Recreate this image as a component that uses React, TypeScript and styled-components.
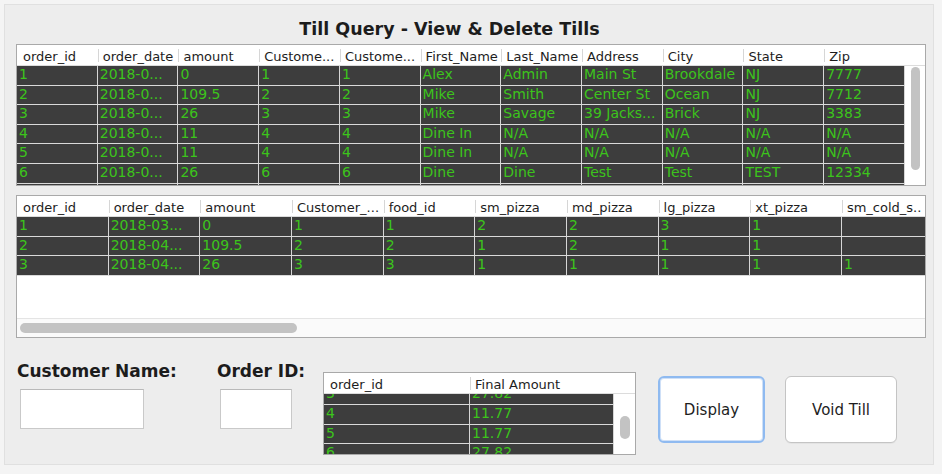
import React from "react";
import styled, { createGlobalStyle } from "styled-components";

const GlobalStyle = createGlobalStyle`
  html, body { margin: 0; padding: 0; background: #f4f4f4; }
  body { font-family: "DejaVu Sans", "Liberation Sans", sans-serif; }
  * { box-sizing: border-box; }
`;

const FONT = `"DejaVu Sans", "Liberation Sans", sans-serif`;

const Frame = styled.div`
  width: 942px;
  height: 474px;
  padding: 4px 8px 9px 4px;
  background: #f4f4f4;
`;

const Panel = styled.div`
  width: 930px;
  height: 461px;
  background: #ededed;
  border: 1px solid #e0e0e0;
  display: flex;
  flex-direction: column;
  padding: 14px 7px 0 11px;
`;

const Title = styled.h1`
  margin: 0 0 5px;
  padding-right: 43px;
  font: bold 17.5px/20px ${FONT};
  color: #1c1c1c;
  text-align: center;
`;

const TableBox = styled.div<{ $h: number; $w?: number; $mt?: number }>`
  flex: none;
  height: ${(p) => p.$h}px;
  width: ${(p) => (p.$w ? `${p.$w}px` : "auto")};
  margin-top: ${(p) => p.$mt ?? 0}px;
  border: 1px solid #a9a9a9;
  background: #ffffff;
  display: flex;
  flex-direction: column;
  overflow: hidden;
`;

const HeaderRow = styled.div`
  flex: none;
  display: flex;
  height: 21px;
  border-bottom: 1px solid #dcdcdc;
  background: #ffffff;
  overflow: hidden;
`;

const HeadCell = styled.div<{ $w: number }>`
  flex: none;
  width: ${(p) => p.$w}px;
  display: flex;
  align-items: center;
  overflow: hidden;
`;

const HeadSep = styled.span`
  flex: none;
  width: 1px;
  height: 13px;
  background: #d6d6d6;
`;

const HeadLabel = styled.span<{ $first?: boolean }>`
  min-width: 0;
  margin-top: 2px;
  padding: 0 2px 0 ${(p) => (p.$first ? 6 : 4)}px;
  font: 13px/15px ${FONT};
  color: #1d1d1d;
  white-space: nowrap;
  overflow: hidden;
  text-overflow: ellipsis;
`;

const HeadCorner = styled.div`
  flex: 1;
  background: #ffffff;
`;

const BodyArea = styled.div`
  flex: 1;
  min-height: 0;
  display: flex;
`;

const RowsViewport = styled.div`
  flex: 1;
  min-width: 0;
  overflow: hidden;
  background: #ffffff;
`;

const RowsInner = styled.div<{ $scroll?: number }>`
  margin-top: ${(p) => -(p.$scroll ?? 0)}px;
`;

const BodyRow = styled.div`
  display: flex;
  height: 19.6px;
  border-bottom: 1px solid #dadada;
`;

const Cell = styled.div<{ $w: number }>`
  flex: none;
  width: ${(p) => p.$w}px;
  background: #3d3d3d;
  border-right: 1px solid #d6d6d6;
  padding-left: 2px;
  color: #3cc41b;
  font: 14px/17px ${FONT};
  white-space: nowrap;
  overflow: hidden;
  text-overflow: ellipsis;
`;

const VTrack = styled.div<{ $w: number }>`
  flex: none;
  width: ${(p) => p.$w}px;
  background: #ffffff;
  padding-left: 6px;
`;

const VThumb = styled.div<{ $top: number; $len: number; $w: number }>`
  width: ${(p) => p.$w}px;
  height: ${(p) => p.$len}px;
  margin-top: ${(p) => p.$top}px;
  border-radius: 5px;
  background: #c3c3c3;
`;

const HTrack = styled.div`
  flex: none;
  height: 19px;
  border-top: 1px solid #e4e4e4;
  background: #fafafa;
  padding: 4px 0 0 3px;
`;

const HThumb = styled.div<{ $len: number }>`
  width: ${(p) => p.$len}px;
  height: 10px;
  border-radius: 5px;
  background: #c3c3c3;
`;

const Gap = styled.div<{ $h: number }>`
  flex: none;
  height: ${(p) => p.$h}px;
`;

const Bottom = styled.div`
  flex: none;
  display: flex;
  align-items: flex-start;
  padding: 23px 0 0 1px;
`;

const FieldGroup = styled.div<{ $w: number }>`
  flex: none;
  width: ${(p) => p.$w}px;
  display: flex;
  flex-direction: column;
  align-items: flex-start;
`;

const FieldLabel = styled.label`
  font: bold 17px/20px ${FONT};
  color: #1c1c1c;
  white-space: nowrap;
`;

const TextInput = styled.input<{ $w: number }>`
  width: ${(p) => p.$w}px;
  height: 40px;
  margin: 8px 0 0 3px;
  background: #ffffff;
  border: 1px solid #c9c9c9;
  border-top-color: #b9b9b9;
  outline: none;
  padding: 0 4px;
  font: 14px ${FONT};
`;

const Button = styled.button<{ $w: number; $ml: number; $focused?: boolean }>`
  flex: none;
  width: ${(p) => p.$w}px;
  height: 67px;
  margin: 15px 0 0 ${(p) => p.$ml}px;
  background: #ffffff;
  border: ${(p) => (p.$focused ? "2px solid #8fbaf0" : "1px solid #c4c4c4")};
  border-radius: 6px;
  box-shadow: ${(p) => (p.$focused ? "inset 0 0 0 1px #cfe0f7" : "0 1px 0 rgba(0,0,0,0.04)")};
  font: 15px ${FONT};
  color: #1e1e1e;
  padding: 0;
  outline: none;
`;

type Row = (string | number)[];

const t1Headers = [
  "order_id",
  "order_date",
  "amount",
  "Custome...",
  "Custome...",
  "First_Name",
  "Last_Name",
  "Address",
  "City",
  "State",
  "Zip",
];

const t1Rows: Row[] = [
  [1, "2018-0...", 0, 1, 1, "Alex", "Admin", "Main St", "Brookdale", "NJ", 7777],
  [2, "2018-0...", 109.5, 2, 2, "Mike", "Smith", "Center St", "Ocean", "NJ", 7712],
  [3, "2018-0...", 26, 3, 3, "Mike", "Savage", "39 Jacks...", "Brick", "NJ", 3383],
  [4, "2018-0...", 11, 4, 4, "Dine In", "N/A", "N/A", "N/A", "N/A", "N/A"],
  [5, "2018-0...", 11, 4, 4, "Dine In", "N/A", "N/A", "N/A", "N/A", "N/A"],
  [6, "2018-0...", 26, 6, 6, "Dine", "Dine", "Test", "Test", "TEST", 12334],
  ["", "", "", "", "", "", "", "", "", "", ""],
];

const t2Headers = [
  "order_id",
  "order_date",
  "amount",
  "Customer_...",
  "food_id",
  "sm_pizza",
  "md_pizza",
  "lg_pizza",
  "xt_pizza",
  "sm_cold_s..",
];

const t2Rows: Row[] = [
  [1, "2018-03...", 0, 1, 1, 2, 2, 3, 1, ""],
  [2, "2018-04...", 109.5, 2, 2, 1, 2, 1, 1, ""],
  [3, "2018-04...", 26, 3, 3, 1, 1, 1, 1, 1],
];

const t3Headers = ["order_id", "Final Amount"];
// list is scrolled: rows 1 and 2 are above the viewport, row 3 is half visible
const t3Rows: Row[] = [
  [3, "27.82"],
  [4, "11.77"],
  [5, "11.77"],
  [6, "27.82"],
];

function Header({ headers, widths }: { headers: string[]; widths: number[] }) {
  return (
    <HeaderRow>
      {headers.map((h, i) => (
        <HeadCell key={i} $w={widths[i]}>
          {i > 0 && <HeadSep />}
          <HeadLabel $first={i === 0}>{h}</HeadLabel>
        </HeadCell>
      ))}
      <HeadCorner />
    </HeaderRow>
  );
}

function Rows({ rows, widths, scroll }: { rows: Row[]; widths: number[]; scroll?: number }) {
  return (
    <RowsViewport>
      <RowsInner $scroll={scroll}>
        {rows.map((r, ri) => (
          <BodyRow key={ri}>
            {r.map((c, ci) => (
              <Cell key={ci} $w={widths[ci]}>
                {c}
              </Cell>
            ))}
          </BodyRow>
        ))}
      </RowsInner>
    </RowsViewport>
  );
}

const w1 = Array(11).fill(888 / 11);
const w2 = Array(10).fill(91.67);
const w3 = [146, 144];

export default function App() {
  return (
    <>
      <GlobalStyle />
      <Frame>
        <Panel>
          <Title>Till Query - View &amp; Delete Tills</Title>

          <TableBox $h={142}>
            <Header headers={t1Headers} widths={w1} />
            <BodyArea>
              <Rows rows={t1Rows} widths={w1} />
              <VTrack $w={20}>
                <VThumb $top={1} $len={103} $w={9} />
              </VTrack>
            </BodyArea>
          </TableBox>

          <Gap $h={9} />

          <TableBox $h={143}>
            <Header headers={t2Headers} widths={w2} />
            <BodyArea>
              <Rows rows={t2Rows} widths={w2} />
            </BodyArea>
            <HTrack>
              <HThumb $len={277} />
            </HTrack>
          </TableBox>

          <Bottom>
            <FieldGroup $w={200}>
              <FieldLabel>Customer Name:</FieldLabel>
              <TextInput $w={124} />
            </FieldGroup>
            <FieldGroup $w={106}>
              <FieldLabel>Order ID:</FieldLabel>
              <TextInput $w={72} />
            </FieldGroup>

            <TableBox $h={83} $w={313} $mt={11}>
              <Header headers={t3Headers} widths={w3} />
              <BodyArea>
                <Rows rows={t3Rows} widths={w3} scroll={8.6} />
                <VTrack $w={21}>
                  <VThumb $top={22} $len={23} $w={10} />
                </VTrack>
              </BodyArea>
            </TableBox>

            <Button $w={107} $ml={22} $focused>
              Display
            </Button>
            <Button $w={112} $ml={20}>
              Void Till
            </Button>
          </Bottom>
        </Panel>
      </Frame>
    </>
  );
}
